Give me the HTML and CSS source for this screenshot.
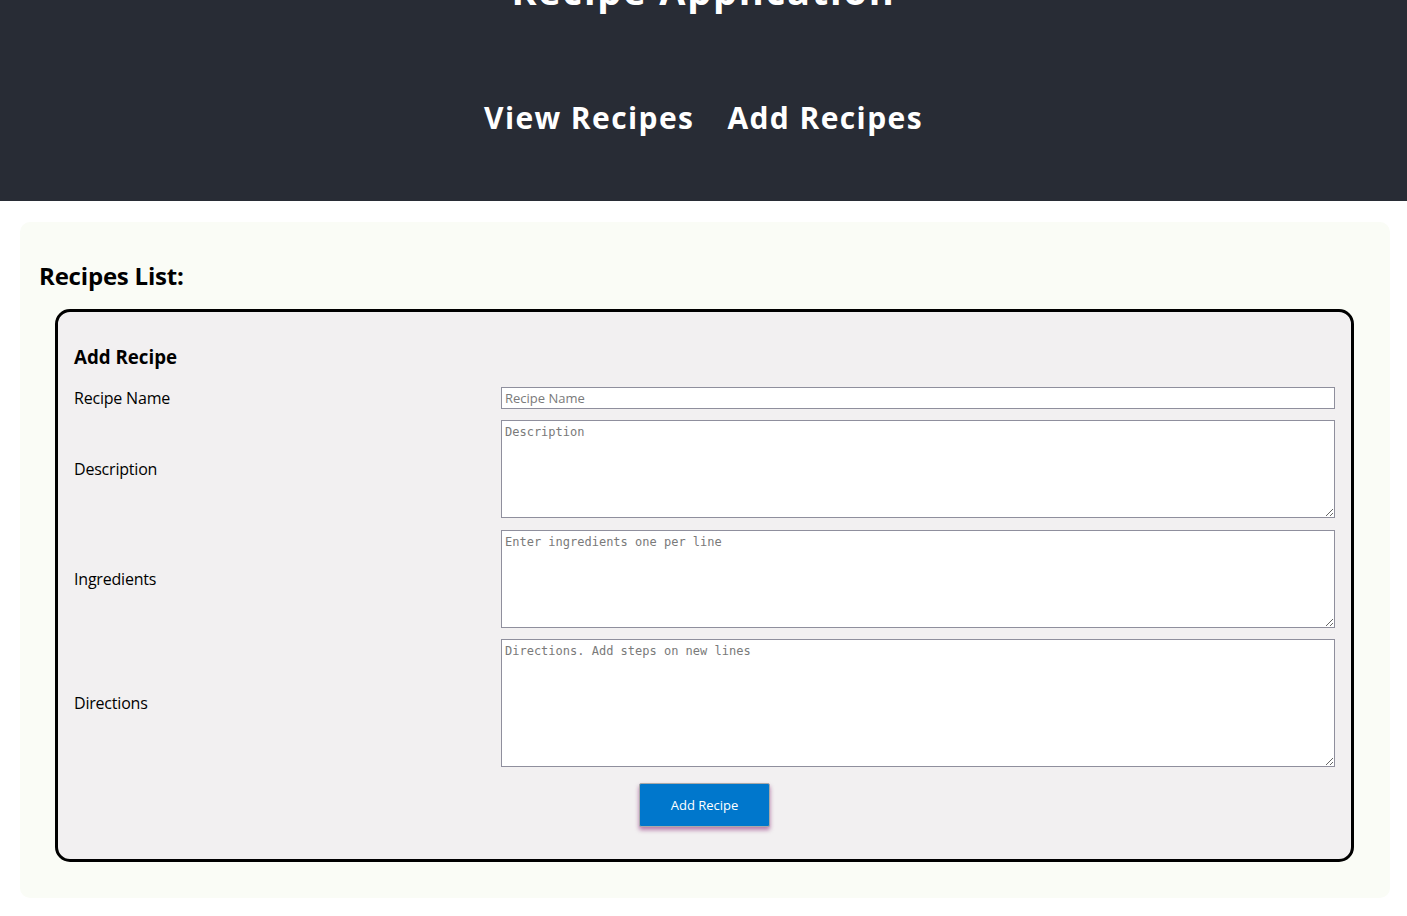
FILE: index.html
```html
<!DOCTYPE html>
<html lang="en">
<head>
<meta charset="utf-8">
<title>Recipe Application</title>
<link rel="stylesheet" href="styles.css">
</head>
<body>
<header class="site-header">
  <h1 class="site-title">Recipe Application</h1>
  <nav class="site-nav">
    <a href="#" class="nav-link">View Recipes</a>
    <a href="#" class="nav-link">Add Recipes</a>
  </nav>
</header>
<main class="panel">
  <h2 class="panel-title">Recipes List:</h2>
  <section class="card">
    <h3 class="card-title">Add Recipe</h3>
    <form class="recipe-form">
      <label class="field-label" for="name">Recipe Name</label>
      <input class="field-input" id="name" type="text" placeholder="Recipe Name">
      <label class="field-label" for="desc">Description</label>
      <textarea class="field-area area-md" id="desc" placeholder="Description"></textarea>
      <label class="field-label" for="ing">Ingredients</label>
      <textarea class="field-area area-md" id="ing" placeholder="Enter ingredients one per line"></textarea>
      <label class="field-label" for="dir">Directions</label>
      <textarea class="field-area area-lg" id="dir" placeholder="Directions. Add steps on new lines"></textarea>
      <button class="submit-btn" type="button">Add Recipe</button>
    </form>
  </section>
</main>
</body>
</html>
```
FILE: styles.css
```css
* { box-sizing: border-box; }

html, body {
  margin: 0;
  padding: 0;
  background: #ffffff;
  font-family: "Open Sans", "Noto Sans", sans-serif;
  color: #000;
  overflow: hidden;
}

.site-header {
  background: #282c35;
  color: #fff;
  display: flex;
  flex-direction: column;
  align-items: center;
  height: 201px;
}

.site-title {
  font-size: 38px;
  font-weight: 700;
  line-height: 44px;
  margin: -32px 0 0;
  letter-spacing: 1.8px;
}

.site-nav {
  display: flex;
  gap: 33px;
  margin-top: 88px;
}

.nav-link {
  color: #fff;
  text-decoration: none;
  font-size: 30px;
  font-weight: 700;
  line-height: 36px;
  letter-spacing: 1.4px;
}

.panel {
  background: #fafcf6;
  border-radius: 10px;
  margin: 21px 17px 0 20px;
  padding: 20px 20px 20px 19px;
}

.panel-title {
  font-size: 24px;
  font-weight: 700;
  line-height: 28px;
  margin: 20px 0 19px;
  letter-spacing: -0.2px;
}

.card {
  background: #f2f0f1;
  border: 3px solid #000;
  border-radius: 15px;
  margin: 0 16px 16px;
  padding: 16px;
}

.card-title {
  font-size: 18.72px;
  font-weight: 700;
  line-height: 22px;
  margin: 18px 0 19px;
}

.recipe-form {
  display: grid;
  grid-template-columns: 1fr 2fr;
  column-gap: 10px;
  row-gap: 11.5px;
  align-items: center;
}

.field-label {
  font-size: 16px;
  line-height: 20px;
  letter-spacing: -0.2px;
}

.field-input {
  font-family: "Open Sans", sans-serif;
  font-size: 13px;
  height: 21.5px;
  padding: 1px 3px;
  border: 1px solid #8f8f9d;
  border-radius: 0;
  background: #fff;
  width: 100%;
}

.field-area {
  font-family: "DejaVu Sans Mono", monospace;
  font-size: 12px;
  padding: 4px 3px;
  border: 1px solid #8f8f9d;
  border-radius: 0;
  background: #fff;
  width: 100%;
  resize: vertical;
  display: block;
}

.area-md { height: 98px; }
.area-lg { height: 128px; }

.field-input::placeholder,
.field-area::placeholder {
  color: #7a7a7a;
}

.submit-btn {
  grid-column: 1 / -1;
  justify-self: center;
  width: 131px;
  height: 44px;
  margin: 4px 0 16px;
  background: #0077cc;
  color: #fff;
  border: 1px solid #a9a9a9;
  border-radius: 2px;
  font-family: "Open Sans", sans-serif;
  font-size: 13px;
  box-shadow: 0 3px 4px rgba(150, 60, 130, 0.65);
}
```
